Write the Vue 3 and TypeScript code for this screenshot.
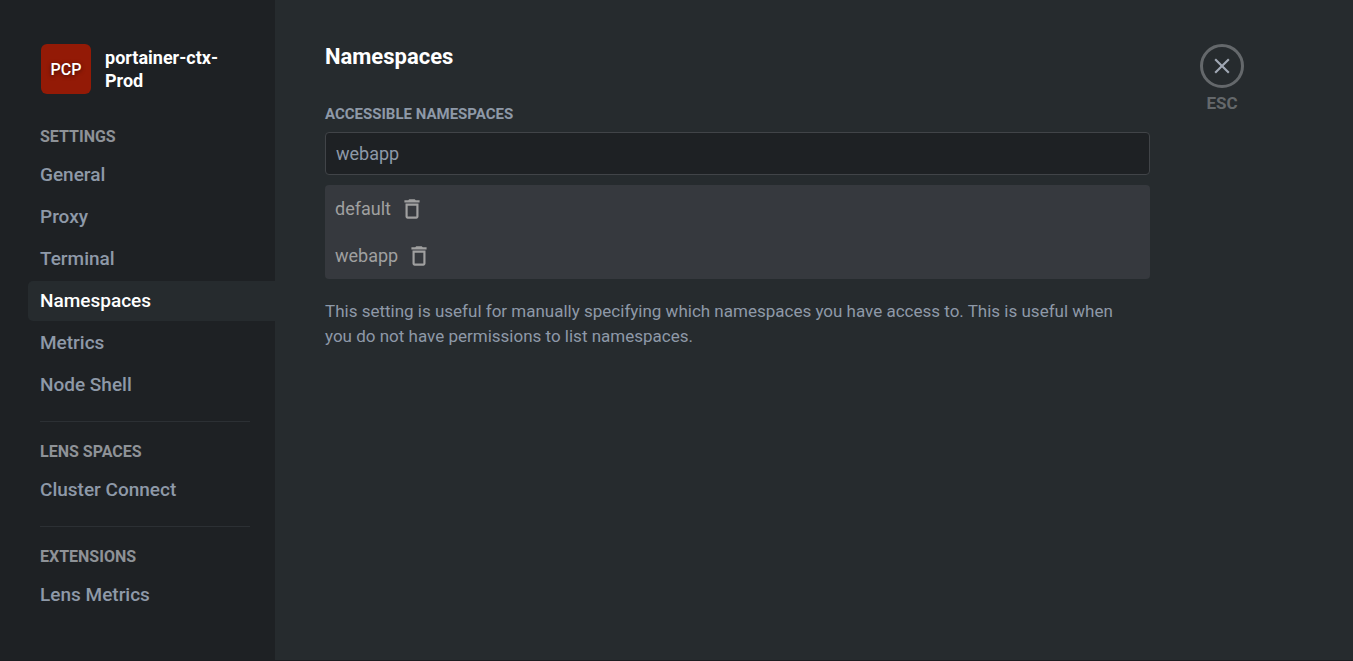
<script setup lang="ts">
import { ref } from 'vue'

interface NavGroup {
  title: string
  items: string[]
}

const groups: NavGroup[] = [
  { title: 'Settings', items: ['General', 'Proxy', 'Terminal', 'Namespaces', 'Metrics', 'Node Shell'] },
  { title: 'Lens Spaces', items: ['Cluster Connect'] },
  { title: 'Extensions', items: ['Lens Metrics'] },
]

const active = ref('Namespaces')
const draft = ref('webapp')
const namespaces = ref<string[]>(['default', 'webapp'])

function add(): void {
  const name = draft.value.trim()
  if (name && !namespaces.value.includes(name)) namespaces.value.push(name)
}

function remove(name: string): void {
  namespaces.value = namespaces.value.filter((n) => n !== name)
}
</script>

<template>
  <div class="layout">
    <aside class="sidebar">
      <header class="cluster">
        <span class="avatar">PCP</span>
        <span class="cluster-name">portainer-ctx-Prod</span>
      </header>
      <nav>
        <section v-for="group in groups" :key="group.title" class="group">
          <h3 class="group-title">{{ group.title }}</h3>
          <ul class="items">
            <li v-for="item in group.items" :key="item">
              <a
                href="#"
                class="item"
                :class="{ active: item === active }"
                :aria-current="item === active ? 'page' : undefined"
                @click.prevent="active = item"
              >{{ item }}</a>
            </li>
          </ul>
        </section>
      </nav>
    </aside>

    <main class="main">
      <section class="content">
        <h2 class="title">Namespaces</h2>
        <label class="label" for="namespace">Accessible Namespaces</label>
        <input id="namespace" v-model="draft" class="input" type="text" @keydown.enter="add" />
        <ul class="list">
          <li v-for="name in namespaces" :key="name" class="row">
            <span>{{ name }}</span>
            <button type="button" class="remove" :aria-label="`Remove ${name}`" @click="remove(name)">
              <svg viewBox="0 0 24 24" width="26" height="26" aria-hidden="true">
                <path
                  fill="currentColor"
                  d="M6 19c0 1.100.9 2 2 2h8c1.100 0 2-.9 2-2V7H6v12zM8 9h8v10H8V9zm7.500-5l-1-1h-5l-1 1H5v2h14V4z"
                />
              </svg>
            </button>
          </li>
        </ul>
        <p class="hint">
          This setting is useful for manually specifying which namespaces you have access to. This is useful when
          you do not have permissions to list namespaces.
        </p>
      </section>
      <div class="tools">
        <button id="close" type="button" class="close" aria-label="Close">
          <svg viewBox="0 0 24 24" width="26" height="26" aria-hidden="true">
            <path
              fill="currentColor"
              d="M19 6.410L17.590 5 12 10.590 6.410 5 5 6.410 10.590 12 5 17.590 6.410 19 12 13.410 17.590 19 19 17.590 13.410 12z"
            />
          </svg>
        </button>
        <label class="esc" for="close">ESC</label>
      </div>
    </main>
  </div>
</template>

<style>
body {
  margin: 0;
  background: #262b2e;
}
</style>

<style scoped>
.layout {
  display: flex;
  box-sizing: border-box;
  min-height: 100vh;
  border-bottom: 1px solid #1b1d20;
  background: #262b2e;
  color: #8e99a8;
  font-family: Roboto, 'Liberation Sans', sans-serif;
  font-size: 18px;
  line-height: 25px;
}

h2,
h3,
p,
ul {
  margin: 0;
  padding: 0;
}

ul {
  list-style: none;
}

button {
  padding: 0;
  border: 0;
  background: none;
  cursor: pointer;
}

svg {
  display: block;
}

.sidebar {
  flex: none;
  box-sizing: border-box;
  width: 275px;
  padding: 44px 0 44px 28px;
  background: #1e2124;
}

.cluster {
  display: flex;
  align-items: center;
  gap: 14px;
  margin: 0 50px 31px 13px;
}

.avatar {
  display: flex;
  flex: none;
  align-items: center;
  justify-content: center;
  width: 50px;
  height: 50px;
  border-radius: 6px;
  background: #931a06;
  color: #fff;
  font-size: 16px;
  font-weight: 500;
  text-shadow: 0 1px 4px #0009;
}

.cluster-name {
  color: #fff;
  font-weight: 700;
  line-height: 23px;
}

.group-title {
  margin: 0 12px 6px;
  color: #8e9297;
  font-size: 16px;
  font-weight: 700;
  line-height: 24px;
  text-transform: uppercase;
}

.group + .group::before {
  content: '';
  display: block;
  margin: 16px 25px 18px 12px;
  border-top: 1px solid #2c3034;
}

.items {
  display: grid;
  gap: 2px;
}

.item {
  display: block;
  padding: 0 12px;
  border-radius: 5px 0 0 5px;
  color: #8e99a8;
  font-size: 19px;
  font-weight: 500;
  line-height: 40px;
  text-decoration: none;
}

.item.active {
  background: #262b2e;
  color: #fff;
}

.main {
  display: flex;
  flex: 1;
  gap: 50px;
  min-width: 0;
  padding: 44px 50px;
}

.content {
  flex: 1;
  min-width: 0;
  max-width: 825px;
}

.title {
  margin-bottom: 33px;
  color: #fff;
  font-size: 22px;
  font-weight: 700;
  line-height: 25px;
}

.label {
  display: block;
  margin-bottom: 6px;
  font-size: 15px;
  font-weight: 700;
  line-height: 24px;
  text-transform: uppercase;
}

.input {
  display: block;
  box-sizing: border-box;
  width: 100%;
  height: 43px;
  padding: 0 10px;
  border: 1px solid #414448;
  border-radius: 4px;
  outline: none;
  background: #1e2124;
  color: #8e99a8;
  font: inherit;
}

.list {
  margin: 10px 0 20px;
  border-radius: 4px;
  background: #36393e;
  color: #a0a0a0;
}

.row {
  display: flex;
  align-items: center;
  gap: 8px;
  height: 47px;
  padding: 0 10px;
}

.remove {
  color: #a0a0a0;
}

.hint {
  padding-right: 14px;
  font-size: 17px;
}

.tools {
  display: flex;
  flex: none;
  flex-direction: column;
  align-items: center;
  gap: 3px;
}

.close {
  display: flex;
  align-items: center;
  justify-content: center;
  box-sizing: border-box;
  width: 44px;
  height: 44px;
  border: 3px solid #64686b;
  border-radius: 50%;
  color: #a0a8b4;
}

.esc {
  color: #64686b;
  font-size: 17px;
  font-weight: 700;
  line-height: 24px;
}
</style>
